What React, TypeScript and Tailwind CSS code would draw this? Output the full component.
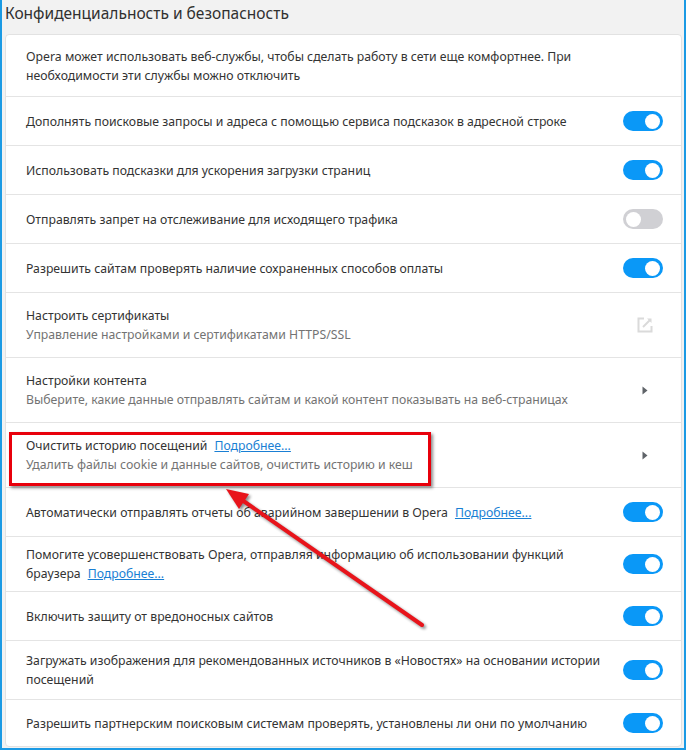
import React from "react";

const font = { fontFamily: '"Noto Sans", "Open Sans", sans-serif' };

function Toggle({ on = true }: { on?: boolean }) {
  return (
    <div
      className={
        "w-[40px] h-[20px] rounded-full flex items-center px-[3px] shrink-0 " +
        (on ? "bg-[#0a98f7] justify-end" : "bg-[#d0d0d4] justify-start")
      }
    >
      <div className="w-[15px] h-[15px] rounded-full bg-white" />
    </div>
  );
}

function Caret() {
  return (
    <svg width="6" height="9" viewBox="0 0 6 9" className="shrink-0 mr-[15px]">
      <path d="M0.5 0.5 L5.5 4.5 L0.5 8.5 Z" fill="#5f6368" />
    </svg>
  );
}

function ExternalIcon() {
  return (
    <svg width="16" height="16" viewBox="0 0 16 16" className="shrink-0 mr-[10px]">
      <path d="M7 1.5 H1.5 V14.5 H14.5 V9" fill="none" stroke="#dadada" strokeWidth="2" />
      <path d="M10 1.5 H14.5 V6 Z" fill="#dadada" />
      <path d="M6 10 L13.5 2.5" stroke="#dadada" strokeWidth="2" />
    </svg>
  );
}

function Link({ children }: { children: React.ReactNode }) {
  return <span className="text-[#1a7fd4] underline ml-[7px]">{children}</span>;
}

function Row({
  h,
  children,
  right,
  last,
}: {
  h: string;
  children: React.ReactNode;
  right?: React.ReactNode;
  last?: boolean;
}) {
  return (
    <div
      className={
        "flex items-center justify-between pl-[20px] pr-[18px] " +
        h +
        (last ? "" : " border-b border-[#e4e4e4]")
      }
    >
      <div className="flex-1 pr-[10px]">{children}</div>
      {right}
    </div>
  );
}

export default function App() {
  return (
    <div
      className="relative w-[686px] h-[750px] overflow-hidden bg-[#f2f2f2] border-l-2 border-r-2 border-b-2 border-[#1b9ae4] text-[12.25px] leading-[19px] text-[#333333]"
      style={font}
    >
      <div className="h-[34px] pt-[2px] pl-[3px] text-[15.5px] leading-[22px] text-[#303030]">
        Конфиденциальность и безопасность
      </div>
      <div className="ml-[3px] mr-[2px] bg-white border border-[#e2e2e2] rounded-[4px]">
        <Row h="h-[62px]">
          <div className="max-w-[560px]">
            Opera может использовать веб-службы, чтобы сделать работу в сети еще комфортнее. При
            необходимости эти службы можно отключить
          </div>
        </Row>
        <Row h="h-[49px]" right={<Toggle />}>
          Дополнять поисковые запросы и адреса с помощью сервиса подсказок в адресной строке
        </Row>
        <Row h="h-[49px]" right={<Toggle />}>
          Использовать подсказки для ускорения загрузки страниц
        </Row>
        <Row h="h-[49px]" right={<Toggle on={false} />}>
          Отправлять запрет на отслеживание для исходящего трафика
        </Row>
        <Row h="h-[49px]" right={<Toggle />}>
          Разрешить сайтам проверять наличие сохраненных способов оплаты
        </Row>
        <Row h="h-[65px]" right={<ExternalIcon />}>
          <div>Настроить сертификаты</div>
          <div className="text-[#737373]">Управление настройками и сертификатами HTTPS/SSL</div>
        </Row>
        <Row h="h-[65px]" right={<Caret />}>
          <div>Настройки контента</div>
          <div className="text-[#737373]">
            Выберите, какие данные отправлять сайтам и какой контент показывать на веб-страницах
          </div>
        </Row>
        <Row h="h-[65px]" right={<Caret />}>
          <div>
            Очистить историю посещений<Link>Подробнее...</Link>
          </div>
          <div className="text-[#737373]">Удалить файлы cookie и данные сайтов, очистить историю и кеш</div>
        </Row>
        <Row h="h-[49px]" right={<Toggle />}>
          Автоматически отправлять отчеты об аварийном завершении в Opera<Link>Подробнее...</Link>
        </Row>
        <Row h="h-[55px]" right={<Toggle />}>
          <div className="max-w-[545px]">
            Помогите усовершенствовать Opera, отправляя информацию об использовании функций браузера
            <Link>Подробнее...</Link>
          </div>
        </Row>
        <Row h="h-[49px]" right={<Toggle />}>
          Включить защиту от вредоносных сайтов
        </Row>
        <Row h="h-[59px]" right={<Toggle />}>
          <div className="max-w-[588px]">
            Загружать изображения для рекомендованных источников в «Новостях» на основании истории
            посещений
          </div>
        </Row>
        <Row h="h-[46px]" right={<Toggle />} last>
          Разрешить партнерским поисковым системам проверять, установлены ли они по умолчанию
        </Row>
      </div>

      {/* red highlight box */}
      <div className="absolute left-[7px] top-[432px] w-[422px] h-[54px] border-[3px] border-[#e8000b] shadow-[2px_2px_3px_rgba(0,0,0,0.45)] pointer-events-none" />

      {/* red arrow */}
      <svg className="absolute left-0 top-0 pointer-events-none" width="686" height="750">
        <defs>
          <filter id="sh" x="-20%" y="-20%" width="140%" height="140%">
            <feGaussianBlur stdDeviation="1.5" />
          </filter>
        </defs>
        <g transform="translate(2,2)" opacity="0.45" filter="url(#sh)">
          <line x1="420" y1="625" x2="240" y2="500" stroke="#000" strokeWidth="4" strokeLinecap="round" />
          <polygon points="224,489 247,494 237,509" fill="#000" />
        </g>
        <line x1="420" y1="625" x2="240" y2="500" stroke="#e8141b" strokeWidth="4" strokeLinecap="round" />
        <polygon points="224,489 247,494 237,509" fill="#e8141b" />
      </svg>
    </div>
  );
}
